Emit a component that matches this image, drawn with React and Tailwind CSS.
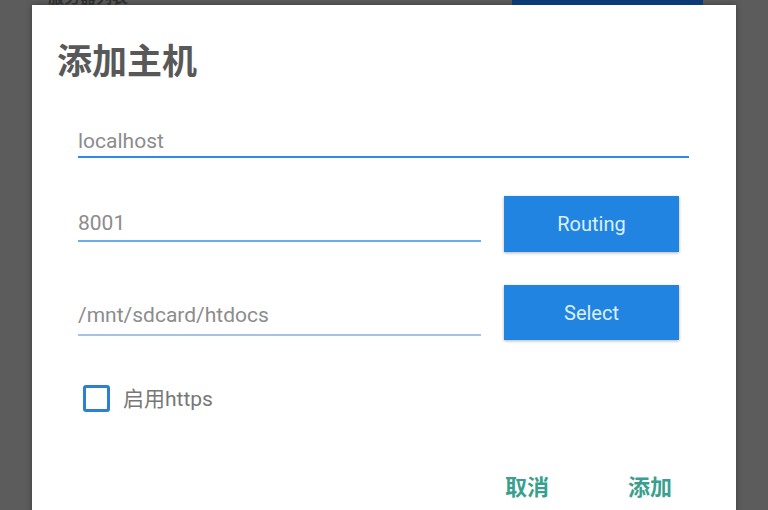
import React from "react";

const latin = { fontFamily: "Roboto, 'Noto Sans CJK SC', sans-serif" };

const Field = ({ value, line, className = "" }) => (
  <div className={className}>
    <div className="text-[21px] leading-[24px] text-[#8c8c8c]">{value}</div>
    <div className={line} />
  </div>
);

const App = () => {
  return (
    <div
      className="h-[510px] w-[768px] overflow-hidden bg-[#5c5c5c]"
      style={latin}
    >
      {/* page behind the dialog, only a sliver shows */}
      <div className="relative h-[5px] overflow-hidden">
        <div className="absolute left-[48px] top-[-14px] text-[16px] font-bold text-[#2e2e2e]">
          服务器列表
        </div>
        <div className="absolute left-[512px] top-[-20px] h-[25px] w-[191px] bg-[#0c3a75]" />
      </div>

      <div className="ml-[32px] h-[600px] w-[704px] bg-white pl-[25px] pt-[42px] shadow-[0_0_6px_rgba(0,0,0,0.35)]">
        <h1 className="text-[35px] font-bold leading-[32px] text-[#585858]">
          添加主机
        </h1>

        <div className="ml-[21px]">
          <div className="mt-[50px] w-[611px]">
            <div className="text-[21px] leading-[24px] text-[#8c8c8c]">localhost</div>
            <div className="mt-[3px] h-[2px] bg-[#2b8be6]" />
          </div>

          <div className="mt-[38px] flex w-[601px] items-start">
            <Field
              value="8001"
              className="w-[403px] pt-[15px]"
              line="mt-[5px] h-[2px] bg-[#6aaee9]"
            />
            <button className="ml-auto h-[56px] w-[175px] bg-[#2084e0] text-[20px] text-[#dcefff] shadow-[0_1px_3px_rgba(0,0,0,0.3)]">
              Routing
            </button>
          </div>

          <div className="mt-[33px] flex w-[601px] items-start">
            <Field
              value="/mnt/sdcard/htdocs"
              className="w-[403px] pt-[18px]"
              line="mt-[7px] h-[2px] bg-[#a6c4e2]"
            />
            <button className="ml-auto h-[55px] w-[175px] bg-[#2084e0] text-[20px] text-[#dcefff] shadow-[0_1px_3px_rgba(0,0,0,0.3)]">
              Select
            </button>
          </div>

          <label className="mt-[45px] ml-[5px] flex items-center gap-[13px]">
            <span className="h-[27px] w-[27px] rounded-[3px] border-[3px] border-[#2c7fd6]" />
            <span className="text-[21px] leading-[24px] text-[#777777]">启用https</span>
          </label>

          <div className="mt-[64px] flex w-[594px] justify-end gap-[79px]">
            <button className="text-[22px] font-bold leading-[24px] text-[#3a9f8e]">取消</button>
            <button className="text-[22px] font-bold leading-[24px] text-[#3a9f8e]">添加</button>
          </div>
        </div>
      </div>
    </div>
  );
};

export default App;
